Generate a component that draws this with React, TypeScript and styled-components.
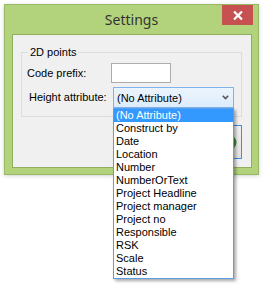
import React from "react";
import styled, { createGlobalStyle } from "styled-components";

const Global = createGlobalStyle`
  html, body { margin: 0; padding: 0; background: #ffffff; }
  body { font-family: "Liberation Sans", Arial, sans-serif; font-size: 11px; color: #000; }
  * { box-sizing: border-box; }
`;

const Page = styled.div`
  padding: 4px 0 0 4px;
  min-height: 294px;
`;

const Window = styled.div`
  width: 255px;
  height: 171px;
  background: #b2d27b;
  border: 1px solid #97b865;
  box-shadow: 0 1px 4px rgba(0, 0, 0, 0.18);
  display: flex;
  flex-direction: column;
`;

const TitleBar = styled.div`
  height: 29px;
  display: grid;
  grid-template-columns: 1fr auto 1fr;
  align-items: center;
`;

const Title = styled.div`
  grid-column: 2;
  font-family: "Noto Sans", "Open Sans", sans-serif;
  font-size: 14px;
  color: #333333;
  line-height: 29px;
`;

const CloseButton = styled.div`
  grid-column: 3;
  justify-self: end;
  align-self: start;
  width: 31px;
  height: 20px;
  margin-right: 5px;
  background: #c75050;
  display: flex;
  align-items: center;
  justify-content: center;
`;

const Client = styled.div`
  flex: 1;
  margin: 0 6px 6px 7px;
  background: #f0f0f0;
  border: 1px solid #8fae5e;
  padding: 11px 9px 0 8px;
  display: flex;
  flex-direction: column;
`;

const Group = styled.fieldset`
  margin: 0;
  padding: 0 0 8px 5px;
  border: 1px solid #dcdcdc;
  min-width: 0;
`;

const Legend = styled.legend`
  margin-left: 1px;
  padding: 0 2px;
  line-height: 13px;
  font-size: 11px;
`;

const Row = styled.div<{ $top: number; $indent: number; $labelWidth: number }>`
  display: flex;
  align-items: center;
  margin-top: ${(p) => p.$top}px;
  padding-left: ${(p) => p.$indent}px;
  & > label {
    width: ${(p) => p.$labelWidth}px;
  }
`;

const Label = styled.label`
  line-height: 13px;
`;

const TextBox = styled.div`
  width: 60px;
  height: 20px;
  background: #fff;
  border: 1px solid #adadad;
`;

const ComboWrap = styled.div`
  position: relative;
  z-index: 2;
`;

const Combo = styled.div`
  width: 121px;
  height: 21px;
  border: 1px solid #7eb4ea;
  background: linear-gradient(#ecf4fc, #dcecfc);
  display: flex;
  align-items: center;
  justify-content: space-between;
  padding: 0 4px 0 3px;
`;

const DropList = styled.ul`
  position: absolute;
  top: 21px;
  left: 0;
  width: 121px;
  margin: 0;
  padding: 0;
  list-style: none;
  background: #fff;
  border: 1px solid #5a9de8;
  box-shadow: 2px 2px 3px rgba(0, 0, 0, 0.35);
`;

const Item = styled.li<{ $selected?: boolean }>`
  height: 13px;
  line-height: 13px;
  padding-left: 2px;
  white-space: nowrap;
  background: ${(p) => (p.$selected ? "#3399ff" : "transparent")};
  color: ${(p) => (p.$selected ? "#fff" : "#000")};
`;

const ButtonRow = styled.div`
  display: flex;
  justify-content: flex-end;
  margin-top: 8px;
`;

const IconButton = styled.div`
  width: 40px;
  height: 34px;
  border: 1px solid #3d8ee8;
  background: linear-gradient(#f0f0f0, #e3e3e3);
  display: flex;
  align-items: center;
  justify-content: flex-end;
  padding-right: 4px;
`;

const items = [
  "(No Attribute)",
  "Construct by",
  "Date",
  "Location",
  "Number",
  "NumberOrText",
  "Project Headline",
  "Project manager",
  "Project no",
  "Responsible",
  "RSK",
  "Scale",
  "Status",
];

export default function App() {
  return (
    <>
      <Global />
      <Page>
        <Window>
          <TitleBar>
            <Title>Settings</Title>
            <CloseButton>
              <svg width="10" height="9" viewBox="0 0 10 9">
                <path d="M1 0.5 L9 8.5 M9 0.5 L1 8.5" stroke="#fff" strokeWidth="2.2" />
              </svg>
            </CloseButton>
          </TitleBar>
          <Client>
            <Group>
              <Legend>2D points</Legend>
              <Row $top={4} $indent={0} $labelWidth={84}>
                <Label>Code prefix:</Label>
                <TextBox />
              </Row>
              <Row $top={4} $indent={2} $labelWidth={84}>
                <Label>Height attribute:</Label>
                <ComboWrap>
                  <Combo>
                    <span>(No Attribute)</span>
                    <svg width="7" height="5" viewBox="0 0 7 5">
                      <path d="M0.8 0.8 L3.5 3.6 L6.2 0.8" stroke="#555" strokeWidth="1.6" fill="none" />
                    </svg>
                  </Combo>
                  <DropList>
                    {items.map((t, i) => (
                      <Item key={t} $selected={i === 0}>
                        {t}
                      </Item>
                    ))}
                  </DropList>
                </ComboWrap>
              </Row>
            </Group>
            <ButtonRow>
              <IconButton>
                <svg width="15" height="15" viewBox="0 0 15 15">
                  <circle cx="7.5" cy="7.5" r="7" fill="#3f8f3a" />
                  <circle cx="7.5" cy="7.5" r="4" fill="#5fb04f" />
                </svg>
              </IconButton>
            </ButtonRow>
          </Client>
        </Window>
      </Page>
    </>
  );
}
